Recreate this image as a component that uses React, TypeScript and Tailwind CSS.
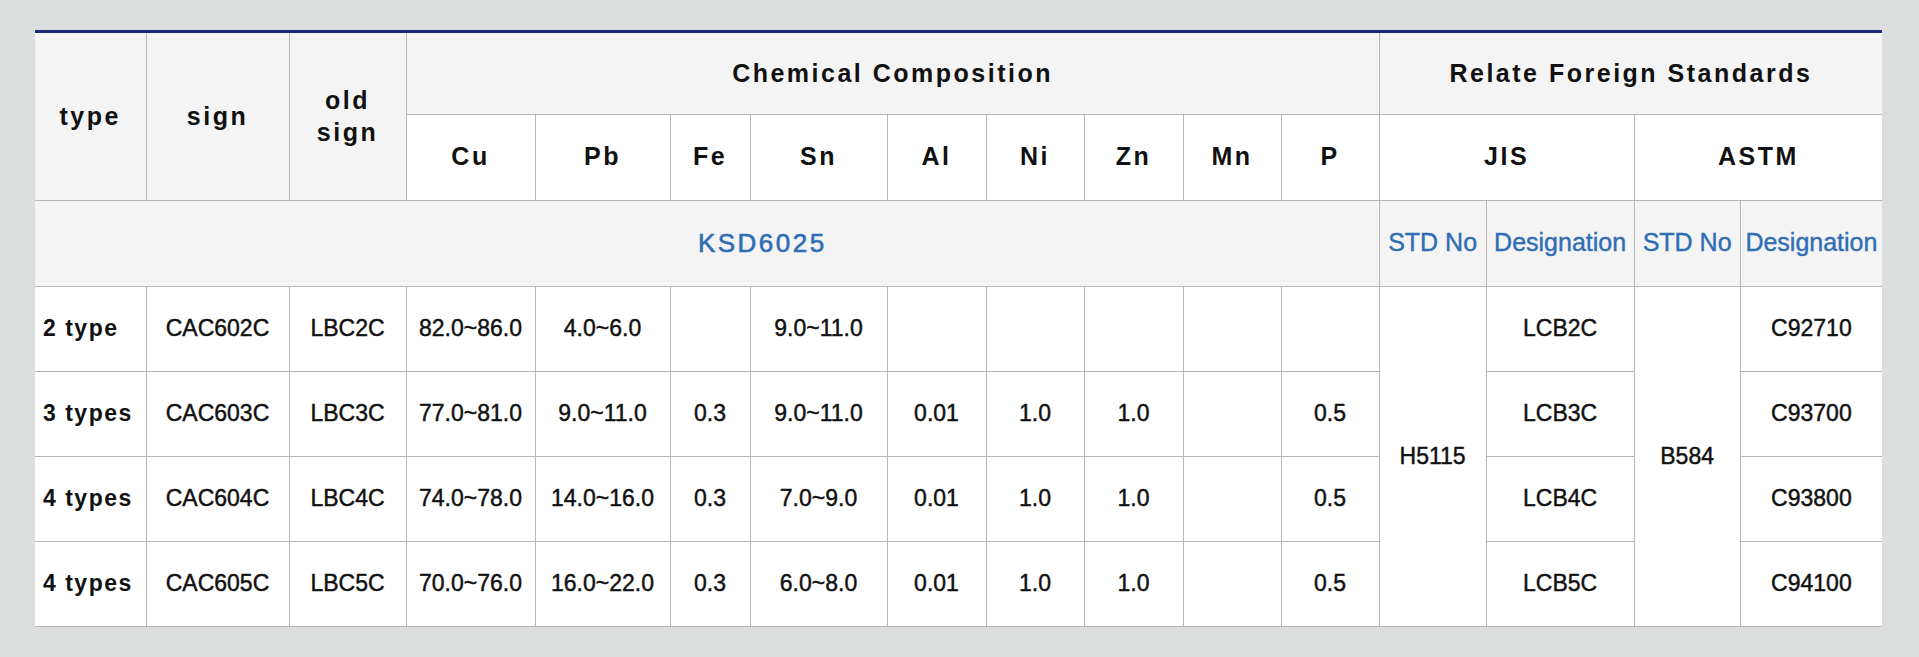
import React from 'react';

const cols = [111, 143, 117, 129, 135, 80, 137, 99, 98, 99, 98, 98, 107, 148, 106, 142];
const elements = ['Cu', 'Pb', 'Fe', 'Sn', 'Al', 'Ni', 'Zn', 'Mn', 'P'];

const rows = [
  { type: '2 type', sign: 'CAC602C', old: 'LBC2C', vals: ['82.0~86.0', '4.0~6.0', '', '9.0~11.0', '', '', '', '', ''], jis: 'LCB2C', astm: 'C92710' },
  { type: '3 types', sign: 'CAC603C', old: 'LBC3C', vals: ['77.0~81.0', '9.0~11.0', '0.3', '9.0~11.0', '0.01', '1.0', '1.0', '', '0.5'], jis: 'LCB3C', astm: 'C93700' },
  { type: '4 types', sign: 'CAC604C', old: 'LBC4C', vals: ['74.0~78.0', '14.0~16.0', '0.3', '7.0~9.0', '0.01', '1.0', '1.0', '', '0.5'], jis: 'LCB4C', astm: 'C93800' },
  { type: '4 types', sign: 'CAC605C', old: 'LBC5C', vals: ['70.0~76.0', '16.0~22.0', '0.3', '6.0~8.0', '0.01', '1.0', '1.0', '', '0.5'], jis: 'LCB5C', astm: 'C94100' },
];

// grid line + centered text, shared by every cell
const cell = 'border border-[#b7b7b7] p-0 text-center align-middle';
const head = `${cell} bg-[#f4f4f4] text-[25px] font-bold tracking-[2.5px] text-[#111]`;
const sub = `${cell} bg-white text-[25px] font-bold tracking-[2.5px] text-[#111]`;
const blue = `${cell} bg-[#f4f4f4] text-[25px] text-[#2f6db5] whitespace-nowrap [-webkit-text-stroke:0.4px]`;
const data = `${cell} bg-white text-[23px] text-[#111] whitespace-nowrap [-webkit-text-stroke:0.45px]`;

export default function App() {
  return (
    <div className="min-h-[657px] w-full bg-[#dcdedd] pt-[30px] pl-[35px]" style={{ fontFamily: '"Liberation Sans", Arial, sans-serif' }}>
      <div className="w-[1847px] border-t-[3px] border-[#1d2878]">
        <table className="w-[1847px] table-fixed border-collapse">
          <colgroup>
            {cols.map((w, i) => (
              <col key={i} style={{ width: w }} />
            ))}
          </colgroup>
          <thead>
            <tr className="h-[81px]">
              <th rowSpan={2} className={`${head} border-t-0 border-l-0`}>type</th>
              <th rowSpan={2} className={`${head} border-t-0`}>sign</th>
              <th rowSpan={2} className={`${head} border-t-0 leading-[32px]`}>
                old<br />sign
              </th>
              <th colSpan={9} className={`${head} border-t-0`}>Chemical Composition</th>
              <th colSpan={4} className={`${head} border-t-0 border-r-0`}>Relate Foreign Standards</th>
            </tr>
            <tr className="h-[86px]">
              {elements.map((e) => (
                <th key={e} className={sub}>{e}</th>
              ))}
              <th colSpan={2} className={sub}>JIS</th>
              <th colSpan={2} className={`${sub} border-r-0`}>ASTM</th>
            </tr>
          </thead>
          <tbody>
            <tr className="h-[86px]">
              <td colSpan={12} className={`${cell} border-l-0 bg-[#f4f4f4] pl-[111px] text-[26px] tracking-[2.5px] text-[#2f6db5] [-webkit-text-stroke:0.6px]`}>KSD6025</td>
              <td className={blue}>STD No</td>
              <td className={blue}>Designation</td>
              <td className={blue}>STD No</td>
              <td className={`${blue} border-r-0`}>Designation</td>
            </tr>
            {rows.map((r, i) => (
              <tr key={i} className="h-[85px]">
                <td className={`${cell} border-l-0 bg-white pl-2 text-left text-[23px] font-bold tracking-[1.5px] whitespace-nowrap text-[#111]`}>{r.type}</td>
                <td className={data}>{r.sign}</td>
                <td className={data}>{r.old}</td>
                {r.vals.map((v, j) => (
                  <td key={j} className={data}>{v}</td>
                ))}
                {i === 0 && <td rowSpan={4} className={data}>H5115</td>}
                <td className={data}>{r.jis}</td>
                {i === 0 && <td rowSpan={4} className={data}>B584</td>}
                <td className={`${data} border-r-0`}>{r.astm}</td>
              </tr>
            ))}
          </tbody>
        </table>
      </div>
    </div>
  );
}
